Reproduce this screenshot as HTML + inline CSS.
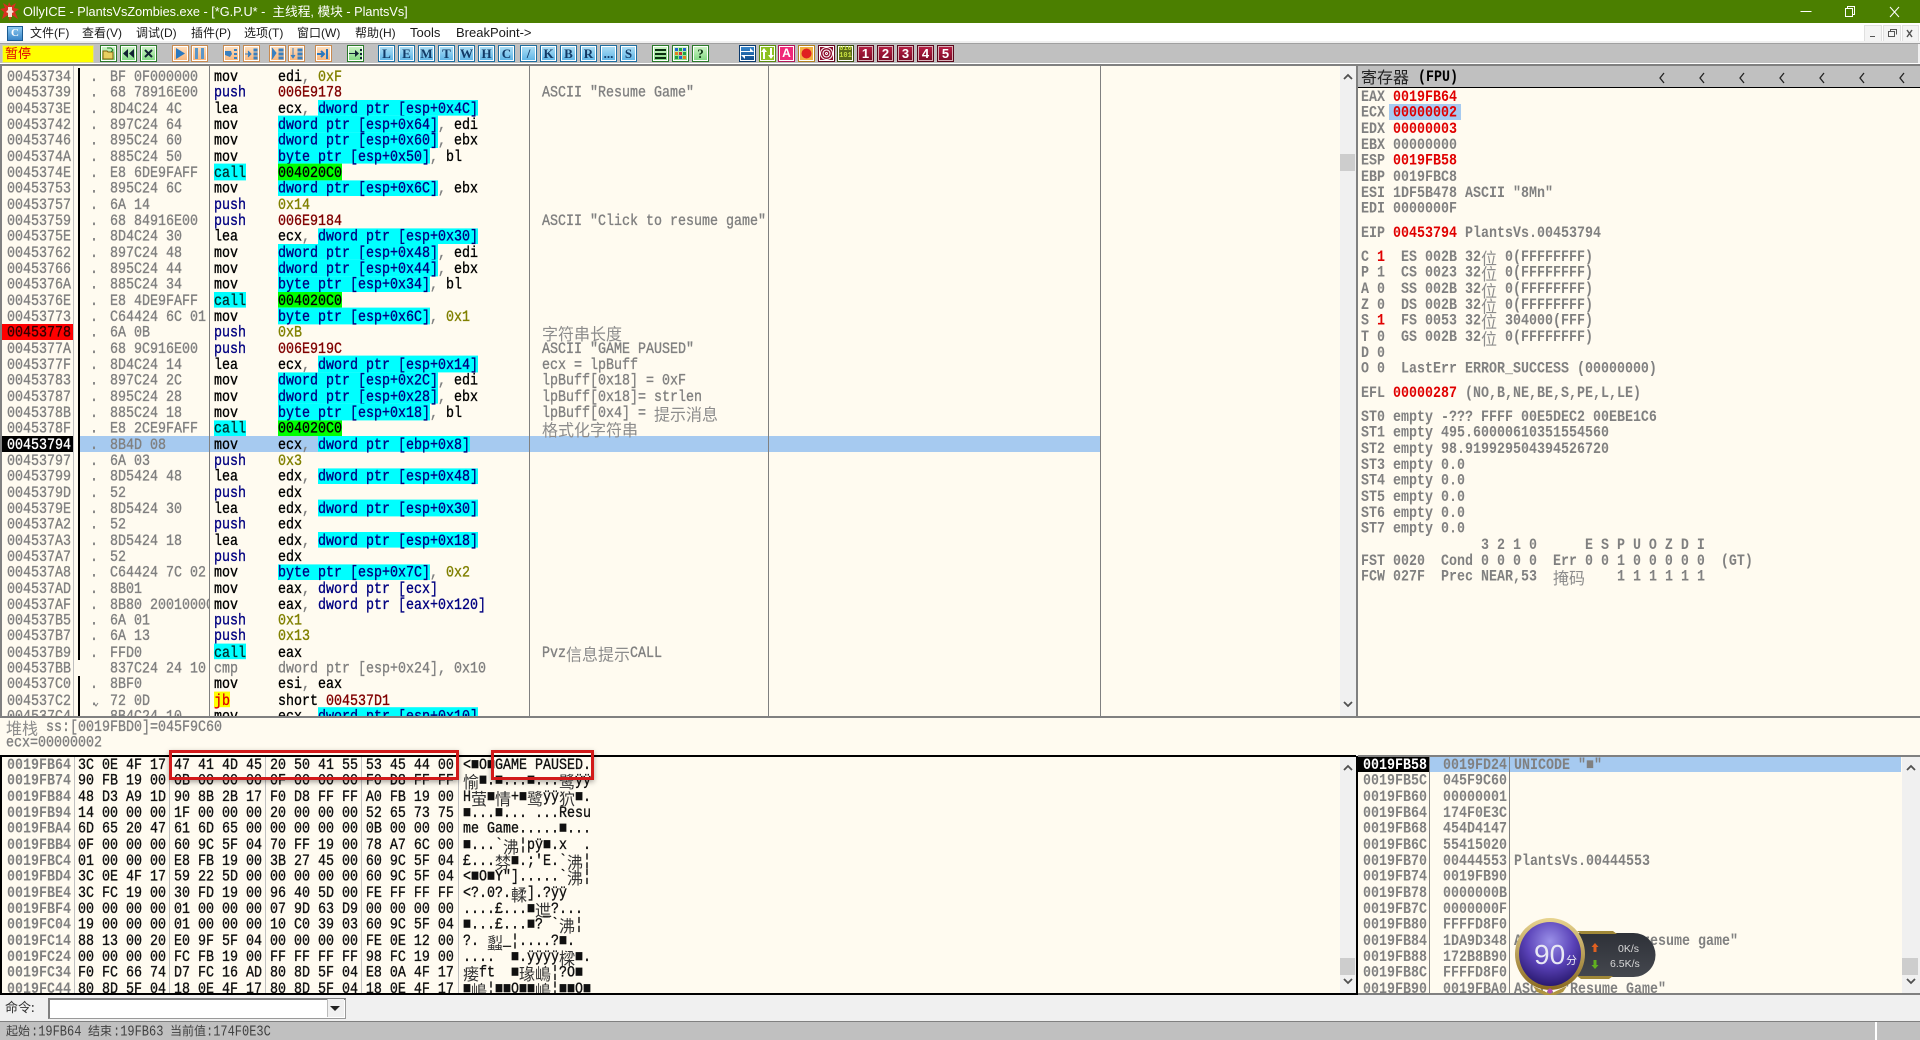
<!DOCTYPE html>
<html><head><meta charset="utf-8"><title>OllyICE</title>
<style>
html,body{margin:0;padding:0;width:1920px;height:1040px;overflow:hidden;background:#f0f0f0}
body{position:relative;font-family:"Liberation Sans","Noto Sans CJK SC",sans-serif}
div,svg,pre{position:absolute}
pre{margin:0;font:13.333px/13.333px "Liberation Mono","Noto Sans CJK SC",monospace;transform:translateY(2px) scaleY(1.2);transform-origin:0 0;white-space:pre;color:#808080;-webkit-text-stroke:.3px}
pre[style*="bold"]{-webkit-text-stroke:0}
u{text-decoration:none;background:#0ff;color:#000080;display:inline-block;height:11.67px;margin-top:-1.667px;padding-top:1.667px;vertical-align:top}
i{font-style:normal;color:#808000}
b{font-weight:inherit;color:#800000}
s{text-decoration:none;color:#808080}
em{font-style:normal;color:#000080}
mark{background:#0f0;color:#000;display:inline-block;height:11.67px;margin-top:-1.667px;padding-top:1.667px;vertical-align:top}
mark.y{background:#ff0;color:#e00000}
.k{display:inline-block;font:16px/13.333px "Noto Sans CJK SC",sans-serif;vertical-align:top;transform:scaleY(.85);-webkit-text-stroke:0;color:#8c8c8c}
.r{color:#e00000}
.m span{position:absolute;top:25px;font-size:12px;line-height:16px;color:#1a1a1a;white-space:pre}
.b{top:45px;width:15px;height:15px;border:1px solid #888;box-shadow:inset 0 0 0 1px #fff;text-align:center;font:bold 13px/15px "Liberation Serif",serif;color:#123a66;overflow:hidden}
.g{background:linear-gradient(#d0f4c8,#80d880);border-color:#2a7a2a}
.o{background:linear-gradient(#ffe0c0,#f8b478);border-color:#c88a50}
.l{background:linear-gradient(#b0e0f6,#5cb4e6);border-color:#1e6ea0}
.d{background:linear-gradient(#b81f45,#7c0c26);border-color:#5a0a1c;color:#fff;font:bold 13px/15px "Liberation Sans",sans-serif;box-shadow:inset 0 0 0 1px #d8b0b8}
.b svg{left:0;top:0}
.ln{background:#808080;width:1px}
.sb{background:#f0f0f0;width:16px}
pre.st{font-size:12px;line-height:12px;transform:scaleY(1.25);top:1024px;color:#404040;-webkit-text-stroke:0}
</style></head><body>

<!-- title bar -->
<div style="left:0;top:0;width:1920px;height:23px;background:#4b7f00"></div>
<svg style="left:0;top:1px" width="20" height="21" viewBox="0 0 20 21"><path d="M9 1l2 4 5-3-2 5 5 1-4 3 3 7-6-4-2 6-2-6-6 4 2-7-4-3 5-1-2-5 5 3z" fill="#d83020"/><path d="M8 6h4v3l2 2-2 1v4H8v-4l-2-1 2-2z" fill="#f4e0d0"/></svg>
<div style="left:23px;top:3px;color:#fff;font-size:12.7px;line-height:18px;white-space:pre">OllyICE - PlantsVsZombies.exe - [*G.P.U* -  主线程, 模块 - PlantsVs]</div>
<svg style="left:1795px;top:0" width="125" height="23" viewBox="0 0 125 23" fill="none" stroke="#fff"><path d="M5.5 11.5h11"/><path d="M50.500 8.500h7v8h-7zM52.500 8.500v-2h7v8h-2"/><path d="M95 7l9 10M104 7l-9 10"/></svg>

<!-- menu -->
<div class="m" style="left:0;top:0;width:1920px;height:41px">
<div style="left:0;top:23px;width:1920px;height:18px;background:#fff"></div>
<div style="left:7px;top:26px;width:14px;height:13px;background:linear-gradient(#8cc8f0,#3a86c8);border:1px solid #1a5a90;font:bold 11px/13px 'Liberation Serif',serif;color:#fff;text-align:center">C</div>
<span style="left:30px">文件(F)</span><span style="left:82px">查看(V)</span><span style="left:136px">调试(D)</span><span style="left:191px">插件(P)</span><span style="left:244px">选项(T)</span><span style="left:297px">窗口(W)</span><span style="left:355px">帮助(H)</span><span style="left:410px;font-size:13px">Tools</span><span style="left:456px;font-size:13px">BreakPoint-&gt;</span>
</div>
<div style="left:1864px;top:25px;width:16px;height:15px;background:#f4f4f4;border:1px solid #e0e0e0"></div>
<div style="left:1883px;top:25px;width:16px;height:15px;background:#f4f4f4;border:1px solid #e0e0e0"></div>
<div style="left:1902px;top:25px;width:15px;height:15px;background:#f4f4f4;border:1px solid #e0e0e0"></div>
<svg style="left:1864px;top:25px" width="56" height="16" fill="none" stroke="#555"><path d="M6 11.500h5"/><path d="M24.500 6.500h6v5h-6zM26.500 6.500v-2h6v5"/><path d="M43 5l5 7M48 5l-5 7" stroke-width="1.500"/></svg>

<!-- toolbar -->
<div style="left:0;top:41px;width:1920px;height:2px;background:#f0f0f0"></div>
<div style="left:0;top:43px;width:1920px;height:1px;background:#a0a0a0"></div>
<div style="left:0;top:44px;width:1918px;height:19px;background:#c0c0c0"></div>
<div style="left:0;top:63px;width:1920px;height:1px;background:#fff"></div>
<div style="left:0;top:64px;width:1920px;height:2px;background:#808080"></div>
<div style="left:2px;top:45px;width:92px;height:18px;background:#ff0;color:#e00000;font-size:13px;line-height:18px;text-indent:3px;box-shadow:inset 0 0 0 1px #d8d890">暂停</div>

<div class="b g" style="left:100px"><svg width="15" height="15"><path d="M2 5h4l1 1h5v7H2z" fill="#e8d060" stroke="#806010"/><path d="M6 2l4 0 2 2-2 2" fill="none" stroke="#208020"/></svg></div>
<div class="b g" style="left:120px"><svg width="15" height="15"><path d="M7 3v9L2 7.500zM13 3v9L8 7.500z" fill="#123"/></svg></div>
<div class="b g" style="left:140px"><svg width="15" height="15"><path d="M4 4l7 7M11 4l-7 7" stroke="#123" stroke-width="2"/></svg></div>
<div class="b o" style="left:172px"><svg width="15" height="15"><path d="M3 2v11l9-5.500z" fill="#2a78c0"/></svg></div>
<div class="b o" style="left:191px"><svg width="15" height="15"><path d="M3 2h3v11H3zM9 2h3v11H9z" fill="#5a96c8"/></svg></div>
<div class="b o" style="left:223px"><svg width="15" height="15"><path d="M1 5h6l1 3-2 3-5-2zM10 3h3v2h-3zM10 7h3v2h-3zM10 11h3v2h-3z" fill="#3a80c0"/></svg></div>
<div class="b o" style="left:243px"><svg width="15" height="15"><path d="M1 8h6M4 5l3 3-3 3M10 3h3v2h-3zM10 7h3v2h-3zM10 11h3v2h-3z" fill="#3a80c0" stroke="#3a80c0"/></svg></div>
<div class="b o" style="left:269px"><svg width="15" height="15"><path d="M2 2l4 5-4 6M9 3h4v2H9zM9 7h4v2H9zM9 11h4v2H9z" fill="#3a80c0" stroke="#3a80c0"/></svg></div>
<div class="b o" style="left:288px"><svg width="15" height="15"><path d="M4 2v9M2 9l2 3 2-3M9 3h4v2H9zM9 7h4v2H9zM9 11h4v2H9z" fill="#3a80c0" stroke="#3a80c0"/></svg></div>
<div class="b o" style="left:315px"><svg width="15" height="15"><path d="M1 8h7M5 5l3 3-3 3M11 3v10" fill="none" stroke="#2a78c0" stroke-width="2"/></svg></div>
<div class="b g" style="left:347px"><svg width="15" height="15"><path d="M1 7h6V4l4 3.500L7 11V8H1zM12 3h2v2h-2zM12 7h2v2h-2zM12 11h2v2h-2z" fill="#123"/></svg></div>

<div class="b l" style="left:378px">L</div><div class="b l" style="left:398px">E</div><div class="b l" style="left:418px">M</div><div class="b l" style="left:438px">T</div><div class="b l" style="left:458px">W</div><div class="b l" style="left:478px">H</div><div class="b l" style="left:498px">C</div><div class="b l" style="left:520px">/</div><div class="b l" style="left:540px">K</div><div class="b l" style="left:560px">B</div><div class="b l" style="left:580px">R</div><div class="b l" style="left:600px">...</div><div class="b l" style="left:620px">S</div>

<div class="b g" style="left:652px"><svg width="15" height="15"><path d="M2 3h11v2H2zM2 7h11v2H2zM2 11h11v2H2z" fill="#0a3010"/></svg></div>
<div class="b g" style="left:672px"><svg width="15" height="15"><path d="M2 2h3v3H2z" fill="#2060d0"/><path d="M6 2h3v3H6z" fill="#20a040"/><path d="M10 2h3v3h-3z" fill="#2060d0"/><path d="M2 6h3v3H2z" fill="#e08020"/><path d="M6 6h3v3H6z" fill="#d03030"/><path d="M10 6h3v3h-3z" fill="#20a040"/><path d="M2 10h3v3H2z" fill="#20a040"/><path d="M6 10h3v3H6z" fill="#2060d0"/><path d="M10 10h3v3h-3z" fill="#e08020"/></svg></div>
<div class="b g" style="left:692px;color:#0a3010">?</div>

<div class="b" style="left:739px;background:linear-gradient(#3a8ad0,#104a88);border-color:#0c3a6c"><svg width="15" height="15"><path d="M1 5h9V2l4 4-4 0H1zM14 10H5v3l-4-4 4 0h9z" fill="#fff"/></svg></div>
<div class="b" style="left:759px;background:#8cc020;border-color:#5a8a10"><svg width="15" height="15"><path d="M4 2l3 4H5v7H3V6H1zM11 13l3-4h-2V2h-2v7H8z" fill="#fff"/></svg></div>
<div class="b" style="left:778px;background:#f02878;border-color:#b01858;color:#fff;font:bold 12px/15px 'Liberation Sans',sans-serif">A</div>
<div class="b" style="left:798px;background:#f0b040;border-color:#b08020"><svg width="15" height="15"><circle cx="7.500" cy="7.500" r="5" fill="#e02020"/></svg></div>
<div class="b" style="left:818px;background:#901030;border-color:#600a20"><svg width="15" height="15" fill="none" stroke="#fff"><circle cx="7.500" cy="7.500" r="6"/><circle cx="7.500" cy="7.500" r="3.500"/><circle cx="7.500" cy="7.500" r="1"/></svg></div>
<div class="b" style="left:837px;background:#5a6a18;border-color:#3a4a10;color:#c8e040;font:bold 7px/7px 'Liberation Mono',monospace">010 101</div>
<div class="b d" style="left:857px">1</div><div class="b d" style="left:877px">2</div><div class="b d" style="left:897px">3</div><div class="b d" style="left:917px">4</div><div class="b d" style="left:937px">5</div>

<!-- CPU disasm -->
<div style="left:0;top:66px;width:1340px;height:650px;background:#fffbf0;overflow:hidden;box-shadow:inset 2px 0 0 #808080">
 <div style="left:2px;top:258px;width:71px;height:16px;background:#f00"></div>
 <div style="left:2px;top:370px;width:71px;height:16px;background:#000"></div>
 <div style="left:79px;top:370px;width:1021px;height:16px;background:#a6caf0"></div>
 <div class="ln" style="left:73px;top:0;height:650px;background:#c0c0c0"></div>
 <div style="left:78px;top:2px;width:2px;height:592px;background:#000"></div>
 <div style="left:78px;top:610px;width:2px;height:40px;background:#000"></div>
 <div class="ln" style="left:209px;top:0;height:650px"></div>
 <div class="ln" style="left:529px;top:0;height:650px"></div>
 <div class="ln" style="left:768px;top:0;height:650px"></div>
 <div class="ln" style="left:1100px;top:0;height:650px"></div>
<pre style="left:7px;top:2px">00453734
00453739
0045373E
00453742
00453746
0045374A
0045374E
00453753
00453757
00453759
0045375E
00453762
00453766
0045376A
0045376E
00453773
<span style="color:#300">00453778</span>
0045377A
0045377F
00453783
00453787
0045378B
0045378F
<span style="color:#fff">00453794</span>
00453797
00453799
0045379D
0045379E
004537A2
004537A3
004537A7
004537A8
004537AD
004537AF
004537B5
004537B7
004537B9
004537BB
004537C0
004537C2
004537C4</pre>
<pre style="left:90px;top:2px">.
.
.
.
.
.
.
.
.
.
.
.
.
.
.
.
.
.
.
.
.
.
.
.
.
.
.
.
.
.
.
.
.
.
.
.
.

.
.
</pre>
<div style="left:110px;top:2px;width:99px;height:660px;overflow:hidden"><pre style="left:0;top:0">BF 0F000000
68 78916E00
8D4C24 4C
897C24 64
895C24 60
885C24 50
E8 6DE9FAFF
895C24 6C
6A 14
68 84916E00
8D4C24 30
897C24 48
895C24 44
885C24 34
E8 4DE9FAFF
C64424 6C 01
6A 0B
68 9C916E00
8D4C24 14
897C24 2C
895C24 28
885C24 18
E8 2CE9FAFF
8B4D 08
6A 03
8D5424 48
52
8D5424 30
52
8D5424 18
52
C64424 7C 02
8B01
8B80 20010000
6A 01
6A 13
FFD0
837C24 24 10
8BF0
72 0D
8B4C24 10</pre></div>
<pre class="mn" style="left:214px;top:2px;color:#000">mov
<em>push</em>
lea
mov
mov
mov
<u style="color:#003030">call</u>
mov
<em>push</em>
<em>push</em>
lea
mov
mov
mov
<u style="color:#003030">call</u>
mov
<em>push</em>
<em>push</em>
lea
mov
mov
mov
<u style="color:#003030">call</u>
mov
<em>push</em>
lea
<em>push</em>
lea
<em>push</em>
lea
<em>push</em>
mov
mov
mov
<em>push</em>
<em>push</em>
<u style="color:#003030">call</u>
<s>cmp</s>
mov
<mark class="y">jb</mark>
mov</pre>
<pre style="left:278px;top:2px;color:#000">edi<s>,</s> <i>0xF</i>
<b>006E9178</b>
ecx<s>,</s> <u>dword ptr [esp+0x4C]</u>
<u>dword ptr [esp+0x64]</u><s>,</s> edi
<u>dword ptr [esp+0x60]</u><s>,</s> ebx
<u>byte ptr [esp+0x50]</u><s>,</s> bl
<mark>004020C0</mark>
<u>dword ptr [esp+0x6C]</u><s>,</s> ebx
<i>0x14</i>
<b>006E9184</b>
ecx<s>,</s> <u>dword ptr [esp+0x30]</u>
<u>dword ptr [esp+0x48]</u><s>,</s> edi
<u>dword ptr [esp+0x44]</u><s>,</s> ebx
<u>byte ptr [esp+0x34]</u><s>,</s> bl
<mark>004020C0</mark>
<u>byte ptr [esp+0x6C]</u><s>,</s> <i>0x1</i>
<i>0xB</i>
<b>006E919C</b>
ecx<s>,</s> <u>dword ptr [esp+0x14]</u>
<u>dword ptr [esp+0x2C]</u><s>,</s> edi
<u>dword ptr [esp+0x28]</u><s>,</s> ebx
<u>byte ptr [esp+0x18]</u><s>,</s> bl
<mark>004020C0</mark>
ecx<s>,</s> <u>dword ptr [ebp+0x8]</u>
<i>0x3</i>
edx<s>,</s> <u>dword ptr [esp+0x48]</u>
edx
edx<s>,</s> <u>dword ptr [esp+0x30]</u>
edx
edx<s>,</s> <u>dword ptr [esp+0x18]</u>
edx
<u>byte ptr [esp+0x7C]</u><s>,</s> <i>0x2</i>
eax<s>,</s> <em>dword ptr [ecx]</em>
eax<s>,</s> <em>dword ptr [eax+0x120]</em>
<i>0x1</i>
<i>0x13</i>
eax
<s>dword ptr [esp+0x24], 0x10</s>
esi<s>,</s> eax
short <b>004537D1</b>
ecx<s>,</s> <u>dword ptr [esp+0x10]</u></pre>
<pre style="left:542px;top:2px">

ASCII "Resume Game"







ASCII "Click to resume game"






<span class="k">字符串长度</span>
ASCII "GAME PAUSED"
ecx = lpBuff
lpBuff[0x18] = 0xF
lpBuff[0x18]= strlen
lpBuff[0x4] = <span class="k">提示消息</span>
<span class="k">格式化字符串</span>













Pvz<span class="k">信息提示</span>CALL</pre>
</div>
<svg style="left:93px;top:701px" width="8" height="8" fill="none" stroke="#808080"><path d="M1 2l2 3 2-3"/></svg>
<!-- disasm scrollbar -->
<div class="sb" style="left:1340px;top:66px;height:650px"></div>
<div style="left:1340px;top:154px;width:15px;height:17px;background:#cdcdcd"></div>
<svg style="left:1340px;top:66px" width="16" height="650" fill="none" stroke="#505050" stroke-width="1.800"><path d="M4 13l4-4 4 4M4 636l4 4 4-4"/></svg>

<!-- registers -->
<div style="left:1356px;top:66px;width:564px;height:650px;background:#fffbf0;overflow:hidden">
 <div style="left:0;top:0;width:2px;height:650px;background:#808080"></div>
 <div style="left:2px;top:0;width:562px;height:21px;background:#c0c0c0"></div>
 <div style="left:2px;top:21px;width:562px;height:1px;background:#000"></div>
 <div style="left:33px;top:38px;width:72px;height:16px;background:#a6caf0"></div>
 <div style="left:5px;top:0;font:16px/20px 'Noto Sans CJK SC',sans-serif;color:#222">寄存器</div>
 <pre style="left:62px;top:2px;color:#000;font-weight:bold">(FPU)</pre>
 <svg style="left:300px;top:4px" width="260" height="16" fill="none" stroke="#222" stroke-width="1.300"><path d="M8 3L4 8l4 5M48 3l-4 5 4 5M88 3l-4 5 4 5M128 3l-4 5 4 5M168 3l-4 5 4 5M208 3l-4 5 4 5M248 3l-4 5 4 5"/></svg>
 <pre style="left:5px;top:22px;font-weight:bold">EAX <span class="r">0019FB64</span>
ECX <span class="r">00000002</span>
EDX <span class="r">00000003</span>
EBX 00000000
ESP <span class="r">0019FB58</span>
EBP 0019FBC8
ESI 1DF5B478 ASCII "8Mn"
EDI 0000000F</pre>
 <pre style="left:5px;top:158px;font-weight:bold">EIP <span class="r">00453794</span> PlantsVs.00453794</pre>
 <pre style="left:5px;top:182px;font-weight:bold">C <span class="r">1</span>  ES 002B 32<span class="k">位</span> 0(FFFFFFFF)
P 1  CS 0023 32<span class="k">位</span> 0(FFFFFFFF)
A 0  SS 002B 32<span class="k">位</span> 0(FFFFFFFF)
Z 0  DS 002B 32<span class="k">位</span> 0(FFFFFFFF)
S <span class="r">1</span>  FS 0053 32<span class="k">位</span> 304000(FFF)
T 0  GS 002B 32<span class="k">位</span> 0(FFFFFFFF)
D 0
O 0  LastErr ERROR_SUCCESS (00000000)</pre>
 <pre style="left:5px;top:318px;font-weight:bold">EFL <span class="r">00000287</span> (NO,B,NE,BE,S,PE,L,LE)</pre>
 <pre style="left:5px;top:342px;font-weight:bold">ST0 empty -??? FFFF 00E5DEC2 00EBE1C6
ST1 empty 495.60000610351554560
ST2 empty 98.919929504394526720
ST3 empty 0.0
ST4 empty 0.0
ST5 empty 0.0
ST6 empty 0.0
ST7 empty 0.0
               3 2 1 0      E S P U O Z D I
FST 0020  Cond 0 0 0 0  Err 0 0 1 0 0 0 0 0  (GT)
FCW 027F  Prec NEAR,53  <span class="k">掩码</span>    1 1 1 1 1 1</pre>
</div>

<!-- info pane -->
<div style="left:0;top:716px;width:1920px;height:2px;background:#808080"></div>
<div style="left:0;top:718px;width:1920px;height:37px;background:#fffbf0"></div>
<pre style="left:6px;top:718px"><span class="k">堆栈</span> ss:[0019FBD0]=045F9C60
ecx=00000002</pre>

<!-- dump -->
<div style="left:0;top:756px;width:1340px;height:237px;background:#fffbf0;overflow:hidden">
 <div style="left:74px;top:0;width:1px;height:237px;background:#c0c0c0"></div>
 <div style="left:169px;top:0;width:1px;height:237px;background:#c0c0c0"></div>
 <div style="left:265px;top:0;width:1px;height:237px;background:#c0c0c0"></div>
 <div style="left:361px;top:0;width:1px;height:237px;background:#c0c0c0"></div>
 <div style="left:458px;top:0;width:1px;height:237px;background:#c0c0c0"></div>
<pre style="left:7px;top:0;font-weight:bold">0019FB64
0019FB74
0019FB84
0019FB94
0019FBA4
0019FBB4
0019FBC4
0019FBD4
0019FBE4
0019FBF4
0019FC04
0019FC14
0019FC24
0019FC34
0019FC44</pre>
<pre style="left:78px;top:0;color:#101010">3C 0E 4F 17 47 41 4D 45 20 50 41 55 53 45 44 00
90 FB 19 00 0B 00 00 00 0F 00 00 00 F0 D8 FF FF
48 D3 A9 1D 90 8B 2B 17 F0 D8 FF FF A0 FB 19 00
14 00 00 00 1F 00 00 00 20 00 00 00 52 65 73 75
6D 65 20 47 61 6D 65 00 00 00 00 00 0B 00 00 00
0F 00 00 00 60 9C 5F 04 70 FF 19 00 78 A7 6C 00
01 00 00 00 E8 FB 19 00 3B 27 45 00 60 9C 5F 04
3C 0E 4F 17 59 22 5D 00 00 00 00 00 60 9C 5F 04
3C FC 19 00 30 FD 19 00 96 40 5D 00 FE FF FF FF
00 00 00 00 01 00 00 00 07 9D 63 D9 00 00 00 00
19 00 00 00 01 00 00 00 10 C0 39 03 60 9C 5F 04
88 13 00 20 E0 9F 5F 04 00 00 00 00 FE 0E 12 00
00 00 00 00 FC FB 19 00 FF FF FF FF 98 FC 19 00
F0 FC 66 74 D7 FC 16 AD 80 8D 5F 04 E8 0A 4F 17
80 8D 5F 04 18 0E 4F 17 80 8D 5F 04 18 0E 4F 17</pre>
<pre style="left:463px;top:0;color:#101010">&lt;■O■GAME PAUSED.
<span class="k" style="color:#333">愉</span>■.■...■...<span class="k" style="color:#333">鹭</span>ÿÿ
H<span class="k" style="color:#333">萤</span>■<span class="k" style="color:#333">情</span>+■<span class="k" style="color:#333">鹭</span>ÿÿ<span class="k" style="color:#333">狖</span>■.
■...■... ...Resu
me Game.....■...
■...`<span class="k" style="color:#333">沸</span>¦pÿ■.x  .
£...<span class="k" style="color:#333">棼</span>■.;'E.`<span class="k" style="color:#333">沸</span>¦
&lt;■O■Y"].....`<span class="k" style="color:#333">沸</span>¦
&lt;?.0?.<span class="k" style="color:#333">輮</span>].?ÿÿ
....£...■<span class="k" style="color:#333">迣</span>?...
■...£...■?¯`<span class="k" style="color:#333">沸</span>¦
?. <span class="k" style="color:#333">蠫</span>_¦....?■.
....  ■.ÿÿÿÿ<span class="k" style="color:#333">樑</span>■.
<span class="k" style="color:#333">瘘</span>ft  ■<span class="k" style="color:#333">瑑</span><span class="k" style="color:#333">嶋</span>¦?O■
■<span class="k" style="color:#333">嶋</span>¦■■O■■<span class="k" style="color:#333">嶋</span>¦■■O■</pre>
</div>
<div style="left:0;top:755px;width:1356px;height:2px;background:#000"></div>
<div style="left:0;top:756px;width:2px;height:238px;background:#000"></div>
<div style="left:0;top:993px;width:1358px;height:2px;background:#000"></div>
<div class="sb" style="left:1340px;top:757px;height:236px"></div>
<div style="left:1340px;top:958px;width:15px;height:17px;background:#cdcdcd"></div>
<svg style="left:1340px;top:757px" width="16" height="236" fill="none" stroke="#505050" stroke-width="1.800"><path d="M4 13l4-4 4 4M4 222l4 4 4-4"/></svg>

<!-- stack -->
<div style="left:1358px;top:757px;width:562px;height:236px;background:#fffbf0;overflow:hidden">
 <div style="left:0;top:0;width:71px;height:15px;background:#000"></div>
 <div style="left:71px;top:0;width:472px;height:15px;background:#a6caf0"></div>
 <div class="ln" style="left:71px;top:0;height:236px"></div>
 <div class="ln" style="left:151px;top:0;height:236px"></div>
<pre style="left:5px;top:-1px;font-weight:bold"><span style="color:#fff">0019FB58</span>
0019FB5C
0019FB60
0019FB64
0019FB68
0019FB6C
0019FB70
0019FB74
0019FB78
0019FB7C
0019FB80
0019FB84
0019FB88
0019FB8C
0019FB90</pre>
<pre style="left:85px;top:-1px;font-weight:bold">0019FD24
045F9C60
00000001
174F0E3C
454D4147
55415020
00444553
0019FB90
0000000B
0000000F
FFFFD8F0
1DA9D348
172B8B90
FFFFD8F0
0019FBA0</pre>
<pre style="left:156px;top:-1px;font-weight:bold">UNICODE "■"





PlantsVs.00444553




ASCII "Click to resume game"


ASCII "Resume Game"</pre>
</div>
<div style="left:1356px;top:756px;width:2px;height:238px;background:#000"></div>
<div style="left:1358px;top:755px;width:562px;height:2px;background:#808080"></div>
<div style="left:1358px;top:993px;width:562px;height:2px;background:#808080"></div>
<div class="sb" style="left:1902px;top:757px;height:236px;width:18px"></div>
<div style="left:1902px;top:958px;width:16px;height:17px;background:#cdcdcd"></div>
<svg style="left:1902px;top:757px" width="18" height="236" fill="none" stroke="#505050" stroke-width="1.800"><path d="M5 13l4-4 4 4M5 222l4 4 4-4"/></svg>

<!-- red annotation boxes -->
<div style="left:169px;top:750px;width:284px;height:24px;border:3px solid #d21a1a;box-shadow:0 2px 5px rgba(0,0,0,.35)"></div>
<div style="left:491px;top:750px;width:97px;height:24px;border:3px solid #d21a1a;box-shadow:0 2px 5px rgba(0,0,0,.35)"></div>

<!-- floating widget -->
<svg style="left:1505px;top:910px" width="160" height="90" viewBox="0 0 160 90">
<defs>
<radialGradient id="ball" cx="50%" cy="30%" r="70%"><stop offset="0" stop-color="#9a90e8"/><stop offset=".55" stop-color="#5a42b8"/><stop offset="1" stop-color="#2a1a70"/></radialGradient>
<linearGradient id="gold" x1="0" y1="0" x2="0" y2="1"><stop offset="0" stop-color="#e8d490"/><stop offset="1" stop-color="#8a6a20"/></linearGradient>
<linearGradient id="pill" x1="0" y1="0" x2="0" y2="1"><stop offset="0" stop-color="#2e3138"/><stop offset="1" stop-color="#44474e"/></linearGradient>
</defs>
<rect x="55" y="23" width="95.500" height="44" rx="22" fill="url(#pill)"/>
<path d="M72 21h36l4 3H76zM72 66h36l-4 3H76z" fill="#a08838"/>
<ellipse cx="45" cy="44" rx="35" ry="36" fill="url(#gold)"/>
<ellipse cx="45" cy="44" rx="31" ry="32" fill="url(#ball)"/>
<path d="M28 76l17 8 17-8-4 6-13 5-13-5z" fill="#b09440"/>
<circle cx="45" cy="81" r="2.500" fill="#b050b0"/>
<text x="29" y="54" font-family="Liberation Sans" font-size="28" fill="#e8e8f4">90</text>
<text x="61" y="54" font-family="Noto Sans CJK SC" font-size="11" fill="#e8e8f4">分</text>
<path d="M90 33l3.500 4h-2v5h-3v-5h-2z" fill="#e06020"/>
<path d="M90 59l3.500-4h-2v-5h-3v5h-2z" fill="#60b020"/>
<text x="113" y="42" font-family="Liberation Sans" font-size="10.500" fill="#d8d8d8">0K/s</text>
<text x="105" y="57" font-family="Liberation Sans" font-size="10.500" fill="#d8d8d8">6.5K/s</text>
</svg>

<!-- command bar -->
<div style="left:0;top:995px;width:1920px;height:26px;background:#f0f0f0"></div>
<div style="left:5px;top:998px;font:13px/18px 'Noto Sans CJK SC',sans-serif;color:#333">命令:</div>
<div style="left:48px;top:998px;width:295px;height:18px;background:#fff;border:1px solid #999;border-left:2px solid #808080;border-top:2px solid #808080"></div>
<div style="left:327px;top:999px;width:16px;height:18px;background:#f0f0f0;border-left:1px solid #bbb"></div>
<svg style="left:327px;top:999px" width="16" height="18"><path d="M3 7h10l-5 5z" fill="#222"/></svg>

<!-- status bar -->
<div style="left:0;top:1021px;width:1920px;height:1px;background:#808080"></div>
<div style="left:0;top:1022px;width:1920px;height:18px;background:#c0c0c0"></div>
<div style="left:1875px;top:1022px;width:2px;height:18px;background:#fff"></div>
<div style="left:6px;top:1022px;font:12px/18px 'Noto Sans CJK SC',sans-serif;color:#404040">起始</div>
<pre class="st" style="left:31px">:19FB64</pre>
<div style="left:88px;top:1022px;font:12px/18px 'Noto Sans CJK SC',sans-serif;color:#404040">结束</div>
<pre class="st" style="left:113px">:19FB63</pre>
<div style="left:170px;top:1022px;font:12px/18px 'Noto Sans CJK SC',sans-serif;color:#404040">当前值</div>
<pre class="st" style="left:206px">:174F0E3C</pre>
</body></html>
